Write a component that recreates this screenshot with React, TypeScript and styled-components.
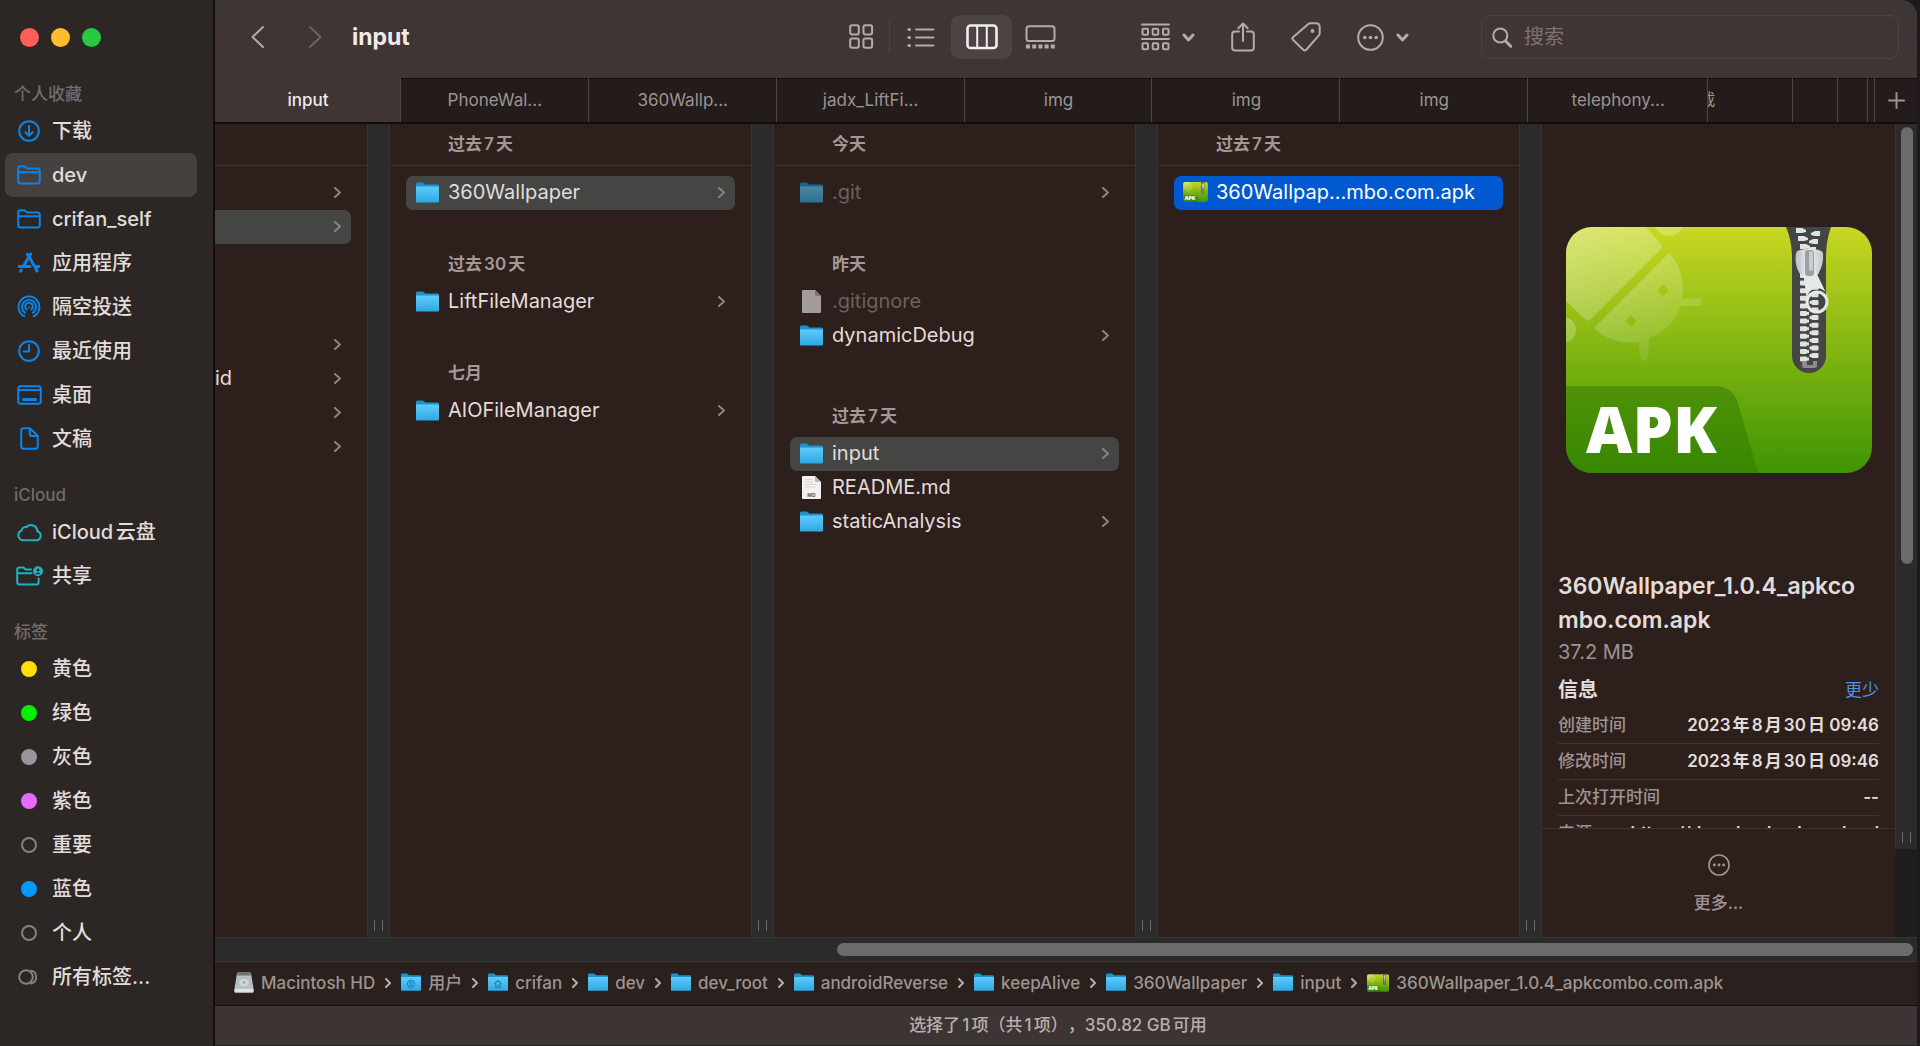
import React, { useId } from "react";
import styled, { createGlobalStyle, css } from "styled-components";

const color = {
  sidebar: "#2c2724",
  toolbar: "#3e3534",
  tab: "#231c1b",
  pane: "#2d1f1c",
  rail: "#2b2b2b",
  railEdge: "#353633",
  line: "#42322f",
  edge: "#130e0d",
  selected: "#454544",
  text: "#e2dcda",
  muted: "#9d9491",
  faint: "#6b615e",
  blue: "#0a84e8",
  teal: "#1fb3bf",
  accent: "#0059d1",
};

const GlobalStyle = createGlobalStyle`
  * { box-sizing: border-box; }
  body {
    margin: 0;
    background: #1b1b1b;
    color: ${color.text};
    font-family: Inter, "Noto Sans CJK SC", sans-serif;
    font-size: 20px;
    line-height: 24px;
    text-autospace: normal;
    text-spacing-trim: space-all;
  }
  button, input {
    margin: 0;
    padding: 0;
    border: 0;
    background: none;
    color: inherit;
    font: inherit;
  }
  ul, dl, dd, h1, h2, h3, p { margin: 0; padding: 0; font: inherit; }
  ul { list-style: none; }
  a { color: inherit; text-decoration: none; }
  svg { display: block; flex: none; }
`;

/* ---------- window ---------- */

const Window = styled.div`
  display: flex;
  height: 100vh;
  margin-right: 3px;
  overflow: hidden;
  border-top-right-radius: 16px;
  background: ${color.toolbar};
`;

const Main = styled.main`
  display: flex;
  flex: 1;
  flex-direction: column;
  min-width: 0;
`;

/* ---------- sidebar ---------- */

const Sidebar = styled.aside`
  flex: none;
  width: 215px;
  border-right: 2px solid ${color.edge};
  background: ${color.sidebar};
`;

const Lights = styled.div`
  display: flex;
  gap: 12px;
  height: 79px;
  padding: 28px 20px 0;
`;

const Light = styled.button<{ $tone: string }>`
  width: 19px;
  height: 19px;
  border-radius: 50%;
  background: ${(p) => p.$tone};
`;

const SideSection = styled.section`
  margin-bottom: 19px;
`;

const SideHeading = styled.h2`
  height: 30px;
  padding-left: 14px;
  color: #736c69;
  font-size: 17px;
  font-weight: 500;
  line-height: 30px;
`;

const SideItem = styled.button<{ $active?: boolean }>`
  display: flex;
  align-items: center;
  gap: 9px;
  width: 192px;
  height: 44px;
  margin-left: 5px;
  padding: 0 0 1px 10px;
  border-radius: 8px;
  background: ${(p) => (p.$active ? "#46413e" : "transparent")};
  font-size: 20px;
  font-weight: 500;
  white-space: nowrap;
`;

const SideIcon = styled.span<{ $tint: string }>`
  display: flex;
  justify-content: center;
  width: 28px;
  color: ${(p) => p.$tint};
`;

const Dot = styled.span<{ $fill?: string }>`
  width: 16px;
  height: 16px;
  border: 2px solid ${(p) => p.$fill ?? "#85807d"};
  border-radius: 50%;
  background: ${(p) => p.$fill ?? "transparent"};
`;

/* ---------- toolbar ---------- */

const Toolbar = styled.header`
  display: flex;
  flex: none;
  align-items: center;
  height: 78px;
  padding: 0 18px 4px 34px;
  background: linear-gradient(#3d3735, #403534 45%, #3e3634);
  color: #b5acaa;
`;

const NavButtons = styled.div`
  display: flex;
  gap: 42px;
`;

const IconButton = styled.button<{ $dim?: boolean }>`
  display: flex;
  align-items: center;
  gap: 12px;
  color: ${(p) => (p.$dim ? "#6d6361" : "inherit")};
`;

const Title = styled.h1`
  flex: 1;
  margin-left: 29px;
  color: #f0ebea;
  font-size: 23px;
  font-weight: 700;
`;

const ViewSwitch = styled.div`
  display: flex;
  align-items: center;
  margin-right: 73px;
`;

const ViewButton = styled.button<{ $active?: boolean; $outer?: boolean }>`
  display: flex;
  align-items: center;
  justify-content: center;
  width: ${(p) => (p.$outer ? 56 : 61)}px;
  height: 44px;
  border-radius: 9px;
  background: ${(p) => (p.$active ? "#4c4442" : "transparent")};
  color: ${(p) => (p.$active ? "#f3efee" : "inherit")};
`;

const Separator = styled.span`
  width: 1px;
  height: 32px;
  background: #4e4543;
`;

const Actions = styled.div`
  display: flex;
  align-items: center;
  gap: 36px;
  margin-right: 72px;
`;

const SearchBox = styled.label`
  display: flex;
  align-items: center;
  gap: 12px;
  width: 418px;
  height: 44px;
  padding: 0 10px;
  border: 1px solid #4c4341;
  border-radius: 9px;
`;

const SearchInput = styled.input`
  flex: 1;
  min-width: 0;
  outline: 0;
  font-size: 20px;
  &::placeholder { color: #7d7371; opacity: 1; }
`;

/* ---------- tabs ---------- */

const TabBar = styled.nav`
  display: flex;
  flex: none;
  height: 46px;
  border-bottom: 2px solid ${color.edge};
`;

const Tab = styled.button<{ $share: number; $active?: boolean }>`
  flex: ${(p) => p.$share} 1 0;
  min-width: 0;
  overflow: hidden;
  background: ${color.tab};
  box-shadow: inset -1px 0 #4f4644, inset 0 1px ${color.edge};
  color: ${color.muted};
  font-size: 17px;
  white-space: nowrap;
  ${(p) =>
    p.$active &&
    css`
      background: ${color.toolbar};
      box-shadow: inset -1px 0 #4f4644;
      color: #efe9e7;
      font-weight: 500;
    `}
  &:last-child { box-shadow: inset 0 1px ${color.edge}; }
`;

const ClippedLabel = styled.span`
  display: flex;
  justify-content: flex-end;
  width: 7px;
  overflow: hidden;
`;

const PlusBox = styled.span`
  display: flex;
  justify-content: center;
`;

/* ---------- columns ---------- */

const Browser = styled.div`
  display: flex;
  flex: 1;
  min-height: 0;
  background: ${color.pane};
`;

const Column = styled.section<{ $cropped?: boolean }>`
  flex: ${(p) => (p.$cropped ? "0 0 152px" : "1 1 0")};
  min-width: 0;
  overflow: hidden;
`;

const ColumnHeader = styled.h3`
  height: 42px;
  margin-bottom: 10px;
  padding-left: 58px;
  border-bottom: 1px solid ${color.line};
  color: #a39997;
  font-size: 17px;
  font-weight: 600;
  line-height: 41px;
`;

const GroupLabel = styled.h3<{ $after: number }>`
  height: 37px;
  margin: ${(p) => (p.$after > 1 ? 45 : 36)}px 0 2px 58px;
  color: #a39997;
  font-size: 17px;
  font-weight: 600;
  line-height: 37px;
`;

const Rows = styled.ul<{ $cropped?: boolean }>`
  padding: 0 16px 0 ${(p) => (p.$cropped ? 0 : 16)}px;
`;

const Row = styled.button<{ $state?: "open" | "picked"; $dim?: boolean; $cropped?: boolean }>`
  display: flex;
  align-items: center;
  gap: 9px;
  width: 100%;
  height: 34px;
  padding: 0 10px 2px;
  border-radius: 7px;
  color: ${(p) => (p.$dim ? color.faint : color.text)};
  font-size: 20px;
  font-weight: 400;
  text-align: left;
  white-space: nowrap;
  ${(p) => p.$state === "open" && css`background: ${color.selected};`}
  ${(p) => p.$state === "picked" && css`background: ${color.accent}; color: #fff;`}
  ${(p) => p.$cropped && css`padding-left: 0; border-radius: 0 7px 7px 0;`}
`;

const RowIcon = styled.span<{ $dim?: boolean }>`
  display: flex;
  justify-content: center;
  width: 23px;
  opacity: ${(p) => (p.$dim ? 0.6 : 1)};
`;

const RowName = styled.span`
  flex: 1;
`;

const ChevronTint = styled.span`
  color: #8b827f;
`;

const Splitter = styled.div`
  display: flex;
  flex: none;
  align-items: flex-end;
  justify-content: center;
  width: 23px;
  padding-bottom: 6px;
  border: solid ${color.railEdge};
  border-width: 0 1px;
  background: ${color.rail};
`;

const Grip = styled.span`
  width: 9px;
  height: 11px;
  border: solid #6a6a69;
  border-width: 0 1px;
`;

/* ---------- preview ---------- */

const Preview = styled.section`
  display: flex;
  flex: 0 0 353px;
  flex-direction: column;
`;

const PreviewBody = styled.div`
  flex: 1;
  min-height: 0;
  overflow: hidden;
  padding: 103px 16px 0;
`;

const Artwork = styled.div`
  display: flex;
  justify-content: center;
  margin-bottom: 96px;
`;

const FileName = styled.h2`
  padding-right: 10px;
  font-size: 23px;
  font-weight: 600;
  line-height: 34px;
  word-break: break-all;
`;

const FileSize = styled.p`
  color: ${color.muted};
  line-height: 30px;
`;

const InfoHead = styled.div`
  display: flex;
  align-items: center;
  justify-content: space-between;
  height: 41px;
  padding-top: 4px;
`;

const InfoTitle = styled.h3`
  font-size: 20px;
  font-weight: 700;
`;

const LessButton = styled.button`
  color: #4a95ea;
  font-size: 17px;
`;

const InfoRow = styled.div`
  display: flex;
  justify-content: space-between;
  height: 36px;
  border-bottom: 1px solid ${color.line};
  font-size: 17px;
  line-height: 35px;
  white-space: nowrap;
`;

const InfoKey = styled.dt`
  color: ${color.muted};
  font-weight: 500;
`;

const InfoValue = styled.dd`
  font-weight: 600;
`;

const PreviewFooter = styled.div`
  display: flex;
  flex: none;
  justify-content: center;
  height: 109px;
  border-top: 1px solid ${color.line};
`;

const MoreButton = styled.button`
  display: flex;
  flex-direction: column;
  align-items: center;
  gap: 15px;
  height: 90px;
  padding-top: 25px;
  color: ${color.muted};
  font-size: 17px;
  font-weight: 500;
`;

const ScrollRail = styled.div`
  display: flex;
  flex: none;
  flex-direction: column;
  width: 22px;
  background: #1e1e1e;
`;

const ScrollTrack = styled.div`
  display: flex;
  flex-direction: column;
  align-items: center;
  justify-content: space-between;
  height: 725px;
  padding: 3px 0 6px;
  border-left: 1px solid ${color.railEdge};
  background: ${color.rail};
`;

const VThumb = styled.div`
  width: 12px;
  height: 61%;
  border-radius: 6px;
  background: #6b6b6b;
`;

/* ---------- bottom bars ---------- */

const HScroll = styled.div`
  display: flex;
  flex: none;
  align-items: center;
  justify-content: flex-end;
  height: 25px;
  padding: 0 4px;
  border-top: 1px solid ${color.railEdge};
  border-bottom: 1px solid #3b3835;
  background: ${color.rail};
`;

const HThumb = styled.div`
  width: 63.5%;
  height: 13px;
  border-radius: 7px;
  background: #6b6b6b;
`;

const PathBar = styled.nav`
  display: flex;
  flex: none;
  align-items: center;
  gap: 10px;
  height: 44px;
  padding: 0 19px 2px;
  border-bottom: 1px solid ${color.edge};
  background: #2a201d;
  color: ${color.muted};
  font-size: 17px;
  font-weight: 500;
`;

const Crumb = styled.a`
  display: flex;
  align-items: center;
  gap: 7px;
  white-space: nowrap;
`;

const CrumbArrow = styled.span`
  color: #b5acaa;
`;

const StatusBar = styled.footer`
  flex: none;
  height: 40px;
  padding-right: 16px;
  border-bottom: 1px solid #2a2423;
  background: #3d3434;
  color: #b8afad;
  font-size: 17px;
  font-weight: 500;
  line-height: 38px;
  text-align: center;
`;

/* ---------- icons ---------- */

type LineIconProps = { w: number; h: number; sw?: number; children: React.ReactNode };

const LineIcon = ({ w, h, sw = 2, children }: LineIconProps) => (
  <svg width={w} height={h} viewBox={`0 0 ${w} ${h}`} fill="none" stroke="currentColor" strokeWidth={sw} strokeLinecap="round" strokeLinejoin="round" aria-hidden="true">
    {children}
  </svg>
);

const Chevron = ({ w, h, sw = 2 }: { w: number; h: number; sw?: number }) => (
  <LineIcon w={w} h={h} sw={sw}>
    <path d={`M${sw / 2} ${sw / 2} L${w - sw / 2} ${h / 2} L${sw / 2} ${h - sw / 2}`} />
  </LineIcon>
);

const DownChevron = () => (
  <LineIcon w={13} h={9} sw={3}>
    <path d="M2 2l4.500 5l4.500 -5" />
  </LineIcon>
);

const DownloadIcon = () => (
  <LineIcon w={22} h={22} sw={2}>
    <circle cx="11" cy="11" r="9.800" />
    <path d="M11 6v9.500M7.300 12.200L11 15.800l3.700-3.600" />
  </LineIcon>
);

const OutlineFolder = () => (
  <LineIcon w={24} h={20}>
    <path d="M1.200 16V3.200Q1.200 1.200 3.200 1.200H7.500L10 3.500H20.500Q22.800 3.500 22.800 5.800V16Q22.800 18.600 20.300 18.600H3.700Q1.200 18.600 1.200 16ZM1.200 7.300H22.800" />
  </LineIcon>
);

const AppsIcon = () => (
  <LineIcon w={24} h={22} sw={3}>
    <path d="M13.600 2L6.300 14.500M10.500 2.200L18.800 16.500L20 19M2.200 14.500H13M18 14.500H21.800M4.200 18.200L3.600 19.200" />
  </LineIcon>
);

const AirdropIcon = () => (
  <LineIcon w={24} h={24} sw={2}>
    <path d="M7.200 21.200A10.400 10.400 0 1 1 16.800 21.200M8.100 17.800A7 7 0 1 1 15.900 17.800M9.600 14.500A3.800 3.800 0 1 1 14.400 14.500" />
    <circle cx="12" cy="12.200" r="1" fill="currentColor" stroke="none" />
  </LineIcon>
);

const ClockIcon = () => (
  <LineIcon w={22} h={22}>
    <circle cx="11" cy="11" r="9.800" />
    <path d="M11 5v6.500H5.800" />
  </LineIcon>
);

const DesktopIcon = () => (
  <LineIcon w={25} h={20}>
    <rect x="1.200" y="1.200" width="22.600" height="17.600" rx="2.500" />
    <path d="M1.200 5H23.800" />
    <path d="M6.500 14.500H18.500" strokeWidth="3" />
  </LineIcon>
);

const DocIcon = () => (
  <LineIcon w={19} h={23}>
    <path d="M3.800 1.200H10L17.800 9V19.300Q17.800 21.800 15.300 21.800H3.700Q1.200 21.800 1.200 19.300V3.700Q1.200 1.200 3.800 1.200ZM9.800 1.500V7Q9.800 9 11.800 9H17.500" />
  </LineIcon>
);

const CloudIcon = () => (
  <LineIcon w={27} h={20}>
    <path d="M7 18.300A5 5 0 0 1 5.500 8.700A4.300 4.300 0 0 1 10.500 5A6.300 6.300 0 0 1 21.300 9.200A4.700 4.700 0 0 1 21 18.300Z" />
  </LineIcon>
);

const SharedIcon = () => (
  <LineIcon w={27} h={20} sw={2}>
    <path d="M15 3.500H9.500L7.500 1.500H3.400Q1.200 1.500 1.200 3.700V16.200Q1.200 18.500 3.500 18.500H20.500Q22.600 18.500 22.600 16.300V12.500M1.200 7.300H15.500" />
    <circle cx="22" cy="5.300" r="5" fill="currentColor" stroke="none" />
    <circle cx="22" cy="3.900" r="1.500" fill={color.sidebar} stroke="none" />
    <path d="M19.200 8.200Q22 5.300 24.800 8.200Z" fill={color.sidebar} stroke="none" />
  </LineIcon>
);

const AllTagsIcon = () => (
  <LineIcon w={22} h={16}>
    <circle cx="8" cy="8" r="6.800" />
    <path d="M13 1.400A6.800 6.800 0 0 1 13 14.600" />
  </LineIcon>
);

const GridIcon = () => (
  <LineIcon w={25} h={26}>
    <rect x="1.200" y="1.200" width="8.600" height="9.200" rx="1.800" />
    <rect x="14.500" y="1.200" width="8.600" height="9.200" rx="1.800" />
    <rect x="1.200" y="14.600" width="8.600" height="9.200" rx="1.800" />
    <rect x="14.500" y="14.600" width="8.600" height="9.200" rx="1.800" />
  </LineIcon>
);

const ListIcon = () => (
  <LineIcon w={28} h={21}>
    <path d="M9 2.500H26.500M9 10.500H26.500M9 18.500H26.500" />
    <path d="M2 2.500H2.500M2 10.500H2.500M2 18.500H2.500" strokeWidth="3" />
  </LineIcon>
);

const ColumnsIcon = () => (
  <LineIcon w={32} h={26} sw={2}>
    <rect x="1.500" y="1.500" width="29" height="22.500" rx="3" strokeWidth="2.600" />
    <path d="M11.200 2V24M20.800 2V24" />
  </LineIcon>
);

const GalleryIcon = () => (
  <LineIcon w={31} h={25}>
    <rect x="1.500" y="1.200" width="28" height="14.800" rx="2.500" />
    <path d="M1 21.500H30" strokeWidth="4" strokeDasharray="4 2.200" strokeLinecap="butt" />
  </LineIcon>
);

const GroupIcon = () => (
  <LineIcon w={29} h={28}>
    <path d="M1 1.500H28M1 16H28" />
    <rect x="1.500" y="5.800" width="5.500" height="6" rx="1" />
    <rect x="11.700" y="5.800" width="5.500" height="6" rx="1" />
    <rect x="22" y="5.800" width="5.500" height="6" rx="1" />
    <rect x="1.500" y="20.200" width="5.500" height="6" rx="1" />
    <rect x="11.700" y="20.200" width="5.500" height="6" rx="1" />
    <rect x="22" y="20.200" width="5.500" height="6" rx="1" />
  </LineIcon>
);

const ShareIcon = () => (
  <LineIcon w={24} h={30}>
    <path d="M8 9.500H4Q1.200 9.500 1.200 12.200V25.800Q1.200 28.500 4 28.500H20Q22.800 28.500 22.800 25.800V12.200Q22.800 9.500 20 9.500H16M12 19V2M7.300 6.300L12 1.500L16.700 6.300" />
  </LineIcon>
);

const TagIcon = () => (
  <LineIcon w={30} h={30}>
    <path d="M17 2.200Q18 1.300 19.500 1.300H25Q28.700 1.300 28.700 5V11Q28.700 12.500 27.700 13.700L15.500 27.500Q13.800 29.300 12 27.500L2 17.800Q.8 16.500 2 15.200Z" />
    <circle cx="21.500" cy="9" r="1.900" fill="currentColor" stroke="none" />
  </LineIcon>
);

const EllipsisIcon = ({ size }: { size: number }) => (
  <svg width={size} height={size} viewBox="0 0 27 27" fill="none" stroke="currentColor" strokeWidth="2" aria-hidden="true">
    <circle cx="13.500" cy="13.500" r="12.300" />
    <g fill="currentColor" stroke="none">
      <circle cx="7.800" cy="13.500" r="1.800" />
      <circle cx="13.500" cy="13.500" r="1.800" />
      <circle cx="19.200" cy="13.500" r="1.800" />
    </g>
  </svg>
);

const SearchIcon = () => (
  <LineIcon w={20} h={21}>
    <circle cx="8.300" cy="8.500" r="7" />
    <path d="M13.500 14L18.800 19.300" strokeWidth="3" />
  </LineIcon>
);

const FolderIcon = ({ w = 23, mark }: { w?: number; mark?: "user" | "home" }) => {
  const id = useId();
  return (
    <svg width={w} height={(w * 21) / 23} viewBox="0 0 23 21" aria-hidden="true">
      <linearGradient id={id} x1="0" y1="0" x2="0" y2="1">
        <stop offset="0" stopColor="#5fcbfb" />
        <stop offset="1" stopColor="#2ea8e2" />
      </linearGradient>
      <path d="M0 2Q0 .5 1.500 .5H7L9.200 2.500H21.500Q23 2.500 23 4V8H0Z" fill="#1b93cf" />
      <path d="M0 4.500H23V19.500Q23 20.500 22 20.500H1Q0 20.500 0 19.500Z" fill={`url(#${id})`} />
      {mark === "user" && (
        <g fill="none" stroke="#1c86c0" strokeWidth="1.200">
          <circle cx="11.500" cy="12.500" r="4.200" />
          <circle cx="11.500" cy="11.500" r="1.400" />
          <path d="M8.800 15.500Q11.500 12.800 14.200 15.500" />
        </g>
      )}
      {mark === "home" && (
        <path d="M7.500 12.500L11.500 8.500L15.500 12.500M8.800 12V16.500H14.200V12M11.500 16.500V13.500" fill="none" stroke="#1c86c0" strokeWidth="1.300" />
      )}
    </svg>
  );
};

const FileIcon = () => (
  <svg width="19" height="23" viewBox="0 0 19 23" aria-hidden="true">
    <path d="M0 1Q0 0 1 0H13L19 6V22Q19 23 18 23H1Q0 23 0 22Z" fill="#f0f0ee" />
    <path d="M13 0V5Q13 6 14 6H19Z" fill="#b4b2b0" />
  </svg>
);

const MarkdownIcon = () => (
  <svg width="19" height="23" viewBox="0 0 19 23" aria-hidden="true">
    <path d="M0 1Q0 0 1 0H13L19 6V22Q19 23 18 23H1Q0 23 0 22Z" fill="#f3f2f0" />
    <path d="M13 0V5Q13 6 14 6H19Z" fill="#bdbbb9" />
    <path d="M3 3.500H10M3 6H11M3 8.500H15M3 11H13" stroke="#d9d7d4" strokeWidth="1" />
    <text x="9.500" y="20.500" fontSize="5" fontWeight="700" textAnchor="middle" fill="#5c5a58" fontFamily="Inter, sans-serif">MD</text>
  </svg>
);

const DiskIcon = () => (
  <svg width="20" height="21" viewBox="0 0 20 21" aria-hidden="true">
    <path d="M3 1.500Q3.200 .5 4.200 .5H15.800Q16.800 .5 17 1.500L19.500 16.500V19.500Q19.500 20.500 18.500 20.500H1.500Q.5 20.500 .5 19.500V16.500Z" fill="#b9c3c6" />
    <path d="M3.500 .8H16.500L16.900 3.500H3.100Z" fill="#6b7478" />
    <ellipse cx="10" cy="10.500" rx="5.500" ry="4.800" fill="#cdd6d8" stroke="#a9b3b6" />
    <circle cx="10" cy="10.500" r="1.300" fill="#98a3a7" />
    <path d="M.5 17H19.500V19.500Q19.500 20.500 18.500 20.500H1.500Q.5 20.500 .5 19.500Z" fill="#dde4e5" />
  </svg>
);

const range = (n: number) => Array.from({ length: n }, (_, i) => i);

const ApkIcon = ({ w }: { w: number }) => {
  const id = useId();
  return (
    <svg width={w} height={Math.round((w * 246) / 306)} viewBox="0 0 306 246" aria-hidden="true">
      <defs>
        <linearGradient id={`${id}bg`} x1="0" y1="0" x2="0" y2="1">
          <stop offset="0" stopColor="#c8d823" />
          <stop offset=".5" stopColor="#82b512" />
          <stop offset="1" stopColor="#3f9404" />
        </linearGradient>
        <linearGradient id={`${id}droid`} gradientUnits="userSpaceOnUse" x1="0" y1="0" x2="90" y2="125">
          <stop offset="0" stopColor="#fff" stopOpacity=".38" />
          <stop offset="1" stopColor="#fff" stopOpacity=".1" />
        </linearGradient>
        <linearGradient id={`${id}metal`} x1="0" y1="0" x2="1" y2="0">
          <stop offset="0" stopColor="#b9c0c2" />
          <stop offset=".5" stopColor="#eef2f3" />
          <stop offset="1" stopColor="#c0c7c9" />
        </linearGradient>
        <clipPath id={`${id}clip`}>
          <rect width="306" height="246" rx="26" />
        </clipPath>
      </defs>
      <g clipPath={`url(#${id}clip)`}>
        <rect width="306" height="246" fill={`url(#${id}bg)`} />
        <g fill={`url(#${id}droid)`}>
          <path d="M0 0H80L95 17Q97 20 95 22L25 92Q22 95 20 93L0 74Z" />
          <circle cx="103" cy="-6" r="15" />
          <circle cx="-3" cy="103" r="13" />
          <path fillRule="evenodd" d="M103 26A52 52 0 0 1 116 72L134 71Q140 75 134 79L115 79A52 52 0 0 1 83 111L82 130Q78 138 74 130L73 115A52 52 0 0 1 28 101ZM97 57L91 63L97 69L103 63ZM65 88L59 94L65 100L71 94Z" />
        </g>
        <path d="M0 159H150Q167 160 172 176L192 246H0Z" fill="#2f7a00" fillOpacity=".5" />
        <text x="20" y="226" fontFamily="'Open Sans', 'Noto Sans', sans-serif" fontWeight="800" fontSize="64" fill="#fff">APK</text>
        <path d="M220 0H265Q260 14 260 30V129A17 17 0 0 1 226 129V30Q226 14 220 0Z" fill="#454545" />
        <g fill="#dfe3e4">
          {range(3).map((i) => (
            <React.Fragment key={i}>
              <path d={`M${230 + i * 2} ${1 + i * 8}h6l4 2v2l-4 1h-6z`} />
              <path d={`M${254 - i * 2} ${4 + i * 8}h-5l-4 2v2l4 1h5z`} />
            </React.Fragment>
          ))}
          {range(12).map((i) => (
            <React.Fragment key={i}>
              <rect x="234" y={46 + i * 7.6} width="7" height="5" rx="1" />
              <rect x="240" y={47 + i * 7.6} width="3" height="3" />
              <rect x="245.500" y={42.5 + i * 7.6} width="7" height="5" rx="1" />
              <rect x="243.500" y={43.5 + i * 7.6} width="3" height="3" />
            </React.Fragment>
          ))}
        </g>
        <path d="M236 135H241V138H247V134H251V139Q251 141 249 141H238Q236 141 236 139Z" fill="#8a8c8d" />
        <path d="M230 26Q231 22 243 22Q256 22 257 26Q258 38 252 47L243 51L234 47Q228 38 230 26Z" fill={`url(#${id}metal)`} />
        <path d="M237 44L249 43L262 70A10 10 0 0 0 241 74Z" fill="#e4e9ea" />
        <circle cx="251" cy="75" r="10" fill="none" stroke="#e4e9ea" strokeWidth="3" />
        <rect x="239" y="23" width="9" height="26" rx="3" fill="#9ba1a3" />
        <rect x="243" y="24" width="4" height="20" rx="2" fill="#c9cecf" />
      </g>
    </svg>
  );
};

/* ---------- data ---------- */

type SideEntry = { label: string; icon: React.ReactNode; tint?: string; active?: boolean };

const sections: { title: string; items: SideEntry[] }[] = [
  {
    title: "个人收藏",
    items: [
      { label: "下载", icon: <DownloadIcon /> },
      { label: "dev", icon: <OutlineFolder />, active: true },
      { label: "crifan_self", icon: <OutlineFolder /> },
      { label: "应用程序", icon: <AppsIcon /> },
      { label: "隔空投送", icon: <AirdropIcon /> },
      { label: "最近使用", icon: <ClockIcon /> },
      { label: "桌面", icon: <DesktopIcon /> },
      { label: "文稿", icon: <DocIcon /> },
    ],
  },
  {
    title: "iCloud",
    items: [
      { label: "iCloud云盘", icon: <CloudIcon />, tint: color.teal },
      { label: "共享", icon: <SharedIcon />, tint: color.teal },
    ],
  },
  {
    title: "标签",
    items: [
      { label: "黄色", icon: <Dot $fill="#ffe000" /> },
      { label: "绿色", icon: <Dot $fill="#00f000" /> },
      { label: "灰色", icon: <Dot $fill="#98969a" /> },
      { label: "紫色", icon: <Dot $fill="#e769ff" /> },
      { label: "重要", icon: <Dot /> },
      { label: "蓝色", icon: <Dot $fill="#0099ff" /> },
      { label: "个人", icon: <Dot /> },
      { label: "所有标签...", icon: <AllTagsIcon />, tint: "#85807d" },
    ],
  },
];

const tabs: { label?: string; share: number; active?: boolean; clipped?: boolean }[] = [
  { label: "input", share: 186, active: true },
  { label: "PhoneWal...", share: 188 },
  { label: "360Wallp...", share: 188 },
  { label: "jadx_LiftFi...", share: 188 },
  { label: "img", share: 188 },
  { label: "img", share: 188 },
  { label: "img", share: 188 },
  { label: "telephony...", share: 180 },
  { label: "载", share: 85, clipped: true },
  { share: 45 },
  { share: 30 },
  { share: 7 },
];

type Entry = {
  name: string;
  kind?: "folder" | "file" | "md" | "apk";
  state?: "open" | "picked";
  dim?: boolean;
};
type Group = { label: string; entries: Entry[] };

const columns: { cropped?: boolean; groups: Group[] }[] = [
  {
    cropped: true,
    groups: [
      { label: "", entries: [{ name: "" }, { name: "", state: "open" }] },
      { label: "", entries: [{ name: "" }, { name: "id" }, { name: "" }, { name: "" }] },
    ],
  },
  {
    groups: [
      { label: "过去7天", entries: [{ name: "360Wallpaper", kind: "folder", state: "open" }] },
      { label: "过去30天", entries: [{ name: "LiftFileManager", kind: "folder" }] },
      { label: "七月", entries: [{ name: "AIOFileManager", kind: "folder" }] },
    ],
  },
  {
    groups: [
      { label: "今天", entries: [{ name: ".git", kind: "folder", dim: true }] },
      {
        label: "昨天",
        entries: [
          { name: ".gitignore", kind: "file", dim: true },
          { name: "dynamicDebug", kind: "folder" },
        ],
      },
      {
        label: "过去7天",
        entries: [
          { name: "input", kind: "folder", state: "open" },
          { name: "README.md", kind: "md" },
          { name: "staticAnalysis", kind: "folder" },
        ],
      },
    ],
  },
  {
    groups: [{ label: "过去7天", entries: [{ name: "360Wallpap...mbo.com.apk", kind: "apk", state: "picked" }] }],
  },
];

const entryIcons = {
  folder: <FolderIcon />,
  file: <FileIcon />,
  md: <MarkdownIcon />,
  apk: <ApkIcon w={25} />,
};

const info = [
  ["创建时间", "2023年8月30日 09:46"],
  ["修改时间", "2023年8月30日 09:46"],
  ["上次打开时间", "--"],
  ["来源", "https://download.apkcombo.d"],
];

const crumbs = [
  { label: "Macintosh HD", icon: <DiskIcon /> },
  { label: "用户", icon: <FolderIcon w={20} mark="user" /> },
  { label: "crifan", icon: <FolderIcon w={20} mark="home" /> },
  { label: "dev", icon: <FolderIcon w={20} /> },
  { label: "dev_root", icon: <FolderIcon w={20} /> },
  { label: "androidReverse", icon: <FolderIcon w={20} /> },
  { label: "keepAlive", icon: <FolderIcon w={20} /> },
  { label: "360Wallpaper", icon: <FolderIcon w={20} /> },
  { label: "input", icon: <FolderIcon w={20} /> },
  { label: "360Wallpaper_1.0.4_apkcombo.com.apk", icon: <ApkIcon w={22} /> },
];

/* ---------- app ---------- */

const FileColumn = ({ groups, cropped }: { groups: Group[]; cropped?: boolean }) => (
  <Column $cropped={cropped}>
    {groups.map((group, g) => (
      <React.Fragment key={g}>
        {g === 0 ? (
          <ColumnHeader>{group.label}</ColumnHeader>
        ) : (
          <GroupLabel $after={groups[g - 1].entries.length}>{group.label}</GroupLabel>
        )}
        <Rows $cropped={cropped}>
          {group.entries.map((entry, i) => (
            <li key={i}>
              <Row $state={entry.state} $dim={entry.dim} $cropped={cropped}>
                {entry.kind && <RowIcon $dim={entry.dim}>{entryIcons[entry.kind]}</RowIcon>}
                <RowName>{entry.name}</RowName>
                {(!entry.kind || entry.kind === "folder") && (
                  <ChevronTint>
                    <Chevron w={7} h={11} />
                  </ChevronTint>
                )}
              </Row>
            </li>
          ))}
        </Rows>
      </React.Fragment>
    ))}
  </Column>
);

export default function App() {
  return (
    <>
      <GlobalStyle />
      <Window>
        <Sidebar>
          <Lights>
            <Light $tone="#ff5f57" aria-label="关闭" />
            <Light $tone="#febc2e" aria-label="最小化" />
            <Light $tone="#28c840" aria-label="缩放" />
          </Lights>
          {sections.map((section) => (
            <SideSection key={section.title}>
              <SideHeading>{section.title}</SideHeading>
              <ul>
                {section.items.map((item) => (
                  <li key={item.label}>
                    <SideItem $active={item.active}>
                      <SideIcon $tint={item.tint ?? color.blue}>{item.icon}</SideIcon>
                      {item.label}
                    </SideItem>
                  </li>
                ))}
              </ul>
            </SideSection>
          ))}
        </Sidebar>

        <Main>
          <Toolbar>
            <NavButtons>
              <IconButton aria-label="后退">
                <LineIcon w={16} h={24} sw={2}>
                  <path d="M14 2L3.500 12L14 22" />
                </LineIcon>
              </IconButton>
              <IconButton aria-label="前进" $dim>
                <LineIcon w={16} h={24} sw={2}>
                  <path d="M3 2L13.500 12L3 22" />
                </LineIcon>
              </IconButton>
            </NavButtons>
            <Title>input</Title>
            <ViewSwitch>
              <ViewButton aria-label="图标" $outer><GridIcon /></ViewButton>
              <Separator />
              <ViewButton aria-label="列表"><ListIcon /></ViewButton>
              <ViewButton aria-label="分栏" $active><ColumnsIcon /></ViewButton>
              <ViewButton aria-label="画廊" $outer><GalleryIcon /></ViewButton>
            </ViewSwitch>
            <Actions>
              <IconButton aria-label="分组"><GroupIcon /><DownChevron /></IconButton>
              <IconButton aria-label="共享"><ShareIcon /></IconButton>
              <IconButton aria-label="标签"><TagIcon /></IconButton>
              <IconButton aria-label="更多"><EllipsisIcon size={27} /><DownChevron /></IconButton>
            </Actions>
            <SearchBox>
              <SearchIcon />
              <SearchInput type="text" placeholder="搜索" aria-label="搜索" />
            </SearchBox>
          </Toolbar>

          <TabBar>
            {tabs.map((tab, i) => (
              <Tab key={i} $share={tab.share} $active={tab.active} aria-label={tab.label ?? "标签页"}>
                {tab.clipped ? <ClippedLabel>{tab.label}</ClippedLabel> : tab.label}
              </Tab>
            ))}
            <Tab $share={42} aria-label="新建标签页">
              <PlusBox>
                <LineIcon w={17} h={17} sw={2}>
                  <path d="M8.500 1V16M1 8.500H16" />
                </LineIcon>
              </PlusBox>
            </Tab>
          </TabBar>

          <Browser>
            {columns.map((column, i) => (
              <React.Fragment key={i}>
                <FileColumn {...column} />
                <Splitter>
                  <Grip />
                </Splitter>
              </React.Fragment>
            ))}
            <Preview>
              <PreviewBody>
                <Artwork>
                  <ApkIcon w={306} />
                </Artwork>
                <FileName>360Wallpaper_1.0.4_apkcombo.com.apk</FileName>
                <FileSize>37.2 MB</FileSize>
                <InfoHead>
                  <InfoTitle>信息</InfoTitle>
                  <LessButton>更少</LessButton>
                </InfoHead>
                <dl>
                  {info.map(([key, value]) => (
                    <InfoRow key={key}>
                      <InfoKey>{key}</InfoKey>
                      <InfoValue>{value}</InfoValue>
                    </InfoRow>
                  ))}
                </dl>
              </PreviewBody>
              <PreviewFooter>
                <MoreButton>
                  <EllipsisIcon size={22} />
                  更多...
                </MoreButton>
              </PreviewFooter>
            </Preview>
            <ScrollRail>
              <ScrollTrack>
                <VThumb />
                <Grip />
              </ScrollTrack>
            </ScrollRail>
          </Browser>

          <HScroll>
            <HThumb />
          </HScroll>

          <PathBar aria-label="路径">
            {crumbs.map((crumb, i) => (
              <React.Fragment key={crumb.label}>
                {i > 0 && (
                  <CrumbArrow>
                    <Chevron w={6} h={10} />
                  </CrumbArrow>
                )}
                <Crumb href="#">
                  {crumb.icon}
                  {crumb.label}
                </Crumb>
              </React.Fragment>
            ))}
          </PathBar>

          <StatusBar>选择了1项（共1项），350.82 GB可用</StatusBar>
        </Main>
      </Window>
    </>
  );
}
